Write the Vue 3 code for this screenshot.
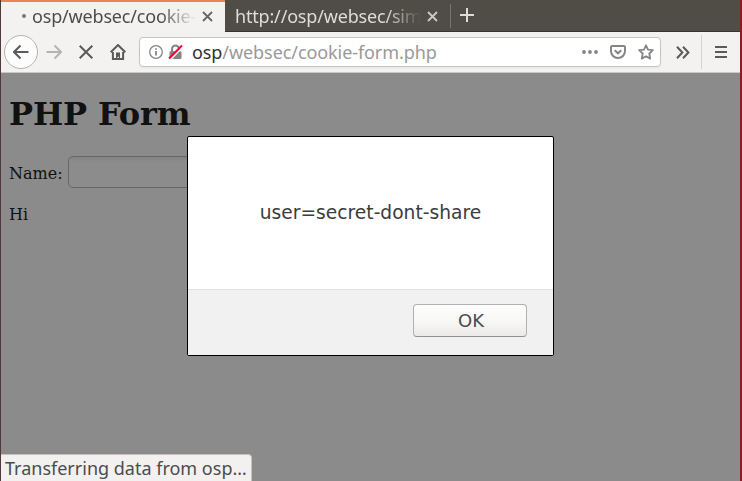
<script setup>
import { ref } from 'vue'

const tabs = ref([
  { title: 'osp/websec/cookie-', active: true },
  { title: 'http://osp/websec/sim', active: false },
])
const name = ref('')
</script>

<template>
  <div class="window">
    <div class="tabbar">
      <div v-for="tab in tabs" :key="tab.title" class="tab" :class="{ active: tab.active }">
        <span v-if="tab.active" class="loading-dot"></span>
        <span class="tab-title">{{ tab.title }}</span>
        <svg class="tab-close" width="11" height="11" viewBox="0 0 11 11"><path d="M1 1l9 9M10 1l-9 9" /></svg>
      </div>
      <div class="tab-end"></div>
      <svg class="new-tab" width="14" height="14" viewBox="0 0 14 14"><path d="M7 0v14M0 7h14" /></svg>
    </div>

    <div class="toolbar">
      <div class="back">
        <svg width="16" height="16" viewBox="0 0 16 16"><path d="M15.500 8H1M7.500 1.500L1 8l6.500 6.500" /></svg>
      </div>
      <svg class="forward" width="16" height="16" viewBox="0 0 16 16"><path d="M.5 8H15M8.500 1.500L15 8l-6.500 6.500" /></svg>
      <svg class="stop" width="14" height="14" viewBox="0 0 14 14"><path d="M.7.7l12.600 12.600M13.300.7L.7 13.300" /></svg>
      <svg class="home" width="16" height="16" viewBox="0 0 16 16">
        <path d="M.7 8.300L8 1l7.300 7.300M2.900 8v6.900h10.200V8" />
        <path class="solid" d="M6 8.500h4V15H8.900v-2.200H7.500V15H6z" />
      </svg>

      <div class="urlbar">
        <svg class="info" width="14" height="14" viewBox="0 0 14 14">
          <circle cx="7" cy="7" r="6.300" />
          <path d="M7 6v4.500M7 3.200v1.600" />
        </svg>
        <svg class="lock" width="15" height="16" viewBox="0 0 15 16">
          <path class="shackle" d="M4 8V5a3.500 3.500 0 0 1 7 0v3" />
          <rect x="1.500" y="7.300" width="12" height="7.700" rx="1.200" />
          <path class="gap" d="M2.500 15.500L15 3" />
          <path class="strike" d="M1 14.500L14 1.500" />
        </svg>
        <div class="url"><span class="host">osp</span>/websec/cookie-form.php</div>
        <svg class="dots" width="16" height="4" viewBox="0 0 16 4"><circle cx="2" cy="2" r="1.900" /><circle cx="8" cy="2" r="1.900" /><circle cx="14" cy="2" r="1.900" /></svg>
        <svg class="pocket" width="16" height="14" viewBox="0 0 16 14">
          <path d="M2.200 1h11.600q1.200 0 1.200 1.200V6a7 7 0 0 1-14 0V2.200Q1 1 2.200 1z" />
          <path d="M4.700 5.200L8 8.300l3.300-3.100" />
        </svg>
        <svg class="star" width="16" height="16" viewBox="0 0 16 16"><path d="M8 1.300l2 4.300 4.900.6-3.600 3.300.9 5.100L8 12.200l-4.200 2.400.9-5.100L1.100 6.200 6 5.600z" /></svg>
      </div>

      <svg class="overflow" width="14" height="13" viewBox="0 0 14 13"><path d="M1 .8l5.400 5.700L1 12.200M7 .8l5.400 5.700L7 12.200" /></svg>
      <div class="separator"></div>
      <svg class="menu" width="12" height="12" viewBox="0 0 12 12"><path d="M0 1h12M0 6h12M0 11h12" /></svg>
    </div>

    <div class="page">
      <h1>PHP Form</h1>
      <div class="field"><label for="name">Name:</label><input id="name" v-model="name" type="text" /></div>
      <p>Hi</p>
      <div class="status">Transferring data from osp…</div>
      <div class="dialog">
        <div class="message">user=secret-dont-share</div>
        <div class="actions"><button type="button">OK</button></div>
      </div>
    </div>
  </div>
</template>

<style>
body { margin: 0; overflow: hidden; }
</style>

<style scoped>
.window {
  box-sizing: border-box;
  width: 742px;
  height: 481px;
  display: flex;
  flex-direction: column;
  overflow: hidden;
  border-left: 1px solid #50393b;
  border-right: 2px solid #842020;
  background: #f3f2f1;
  font-family: "Noto Sans", sans-serif;
}
svg { flex: none; display: block; fill: none; }
.tabbar {
  box-sizing: border-box;
  height: 32px;
  flex: none;
  display: flex;
  background: #504d46;
  border-bottom: 1px solid #37352f;
}
.tab {
  box-sizing: border-box;
  width: 225px;
  height: 31px;
  display: flex;
  align-items: center;
  padding: 1px 12px 0 10px;
  color: #deddd8;
}
.tab.active {
  width: 224px;
  height: 32px;
  padding: 0 12px 2px 21px;
  border-top: 2px solid #f08056;
  background: #f3f2f1;
  color: #4c4c4c;
}
.loading-dot { width: 4px; height: 4px; margin-right: 6px; flex: none; border-radius: 50%; background: #777; }
.tab-title {
  flex: 1;
  overflow: hidden;
  white-space: nowrap;
  font-size: 18px;
  line-height: 26px;
  letter-spacing: -0.18px;
  -webkit-mask-image: linear-gradient(to left, transparent, #000 36px);
  mask-image: linear-gradient(to left, transparent, #000 36px);
}
.tab-close { margin-left: 6px; stroke: #c9c8c3; stroke-width: 1.9; }
.active .tab-close { stroke: #696867; }
.tab-end { width: 1px; height: 24px; margin-top: 4px; background: #77746d; }
.new-tab { margin: 8px 0 0 9px; stroke: #dedcd7; stroke-width: 2; }
.toolbar {
  box-sizing: border-box;
  height: 41px;
  flex: none;
  display: flex;
  align-items: center;
  padding-left: 3px;
  border-bottom: 1px solid #c9c8c7;
  stroke: #5b5a59;
  stroke-width: 2;
}
.back {
  box-sizing: border-box;
  width: 34px;
  height: 34px;
  display: flex;
  align-items: center;
  justify-content: center;
  border: 1px solid #b5b4b3;
  border-radius: 50%;
  background: #fcfcfc;
}
.forward { margin-left: 8px; stroke: #b5b4b3; }
.stop { margin-left: 17px; }
.home { margin-left: 17px; }
.home .solid { fill: #5b5a59; stroke: none; }
.urlbar {
  box-sizing: border-box;
  width: 522px;
  height: 30px;
  margin-left: 13px;
  display: flex;
  align-items: center;
  padding: 0 6px 0 9px;
  background: #fff;
  border: 1px solid #c6c5c4;
  border-radius: 4px;
  box-shadow: 0 1px 3px #0000000c;
}
.info { stroke: #858585; stroke-width: 1.3; }
.info path { stroke-width: 1.8; }
.lock { margin-left: 5px; }
.lock rect { fill: #858585; stroke: none; }
.lock .shackle { stroke: #858585; }
.lock .gap { stroke: #fff; stroke-width: 1.5; }
.lock .strike { stroke: #ff0039; stroke-width: 2; }
.url { flex: 1; margin-left: 9px; color: #999; font-size: 18px; line-height: 28px; letter-spacing: -0.08px; white-space: nowrap; }
.host { color: #303030; }
.dots circle { fill: #858585; stroke: none; }
.pocket { margin-left: 12px; stroke: #858585; }
.star { margin-left: 12px; stroke: #858585; stroke-width: 1.8; stroke-linejoin: round; }
.overflow { margin-left: 15px; }
.separator { width: 1px; height: 34px; margin-left: 11px; background: #d4d3d2; }
.menu { margin-left: 13px; }
.page {
  position: relative;
  flex: 1;
  box-sizing: border-box;
  padding: 22px 8px 0;
  background: #8b8b8b;
  color: #111;
  font: 16px/19px "DejaVu Serif", serif;
}
h1 { margin: 0; font-size: 32px; line-height: 38px; font-weight: bold; letter-spacing: -0.12px; }
.field { display: flex; align-items: center; margin-top: 23px; height: 32px; }
.field label { margin: 2px 5px 0 0; }
.field input {
  box-sizing: border-box;
  width: 190px;
  height: 32px;
  border: 1px solid #666;
  border-radius: 5px;
  background: linear-gradient(#838383, #8c8c8c 5px);
  outline: none;
}
p { margin: 17px 0 0; }
.status {
  position: absolute;
  left: 0;
  bottom: 0;
  box-sizing: border-box;
  width: 251px;
  height: 27px;
  padding-left: 4px;
  background: #f2f1f0;
  border-top: 1px solid #c5bfbd;
  border-right: 1px solid #c5c3c1;
  border-top-right-radius: 4px;
  color: #4c4c4c;
  font: 18px/26px "Noto Sans", sans-serif;
  white-space: nowrap;
}
.dialog {
  position: absolute;
  left: 186px;
  top: 63px;
  box-sizing: border-box;
  width: 367px;
  height: 220px;
  display: flex;
  flex-direction: column;
  border: 1px solid #000;
  border-radius: 2px;
  overflow: hidden;
  background: #fff;
  color: #3c3c3c;
  font-family: "DejaVu Sans", sans-serif;
}
.message { flex: 1; display: flex; align-items: center; justify-content: center; padding-bottom: 2px; font-size: 18.67px; }
.actions {
  box-sizing: border-box;
  height: 66px;
  padding: 14px 26px 0 0;
  display: flex;
  justify-content: flex-end;
  background: #f1f1f1;
  border-top: 1px solid #e1e1e1;
}
button {
  box-sizing: border-box;
  width: 114px;
  height: 33px;
  padding: 0 0 0 2px;
  border: 1px solid #b2b1b0;
  border-bottom-color: #929190;
  border-radius: 4px;
  background: linear-gradient(#fdfdfd, #f8f8f7 50%, #ebeae8);
  color: #4c4c4c;
  font: 18px "DejaVu Sans", sans-serif;
}
</style>
